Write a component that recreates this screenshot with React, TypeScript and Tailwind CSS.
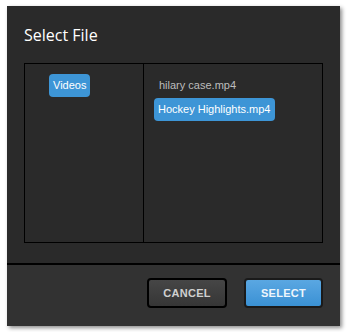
export default function App() {
  return (
    <div className="h-[332px] w-[347px] bg-white pl-[7px] pt-[6px]">
      <div className="flex h-[320px] w-[333px] flex-col bg-[#2a2a2a] shadow-[2px_2px_4px_rgba(0,0,0,0.45)] font-['Open_Sans',sans-serif]">
        {/* cabecera */}
        <div className="h-[57px] pl-[17px] pt-[19px] text-[16px] leading-[20px] text-white">Select File</div>

        {/* navegador de archivos */}
        <div className="mx-[17px] flex h-[180px] border border-black">
          <div className="w-[119px] border-r border-black pl-[24px] pt-[7px]">
            <span className="inline-block rounded-[4px] bg-[#3d95d6] px-[4px] py-[2px] text-[11px] leading-[19px] text-white font-['Liberation_Sans',sans-serif]">
              Videos
            </span>
          </div>
          <div className="flex-1 pl-[10px] pt-[13px] font-['Liberation_Sans',sans-serif] text-[11px]">
            <div className="pl-[5px] leading-[16px] text-[#bdbdbd]">hilary case.mp4</div>
            <span className="mt-[5px] inline-block rounded-[4px] bg-[#3d95d6] px-[4px] py-[2px] leading-[19px] text-white">
              Hockey Highlights.mp4
            </span>
          </div>
        </div>

        {/* pie con botones */}
        <div className="mt-[20px] flex flex-1 items-start justify-end gap-[17px] border-t-2 border-black bg-[#323232] pr-[17px] pt-[13px] font-['Liberation_Sans',sans-serif] text-[11px] font-bold">
          <button className="h-[30px] w-[80px] rounded-[4px] border-2 border-black bg-gradient-to-b from-[#464646] to-[#363636] tracking-wide text-[#d0d0d0]">
            CANCEL
          </button>
          <button className="h-[30px] w-[79px] rounded-[4px] border-2 border-[#1a1a1a] bg-gradient-to-b from-[#5aa7e2] to-[#3a91d4] tracking-wide text-[#eef6fc]">
            SELECT
          </button>
        </div>
      </div>
    </div>
  );
}
